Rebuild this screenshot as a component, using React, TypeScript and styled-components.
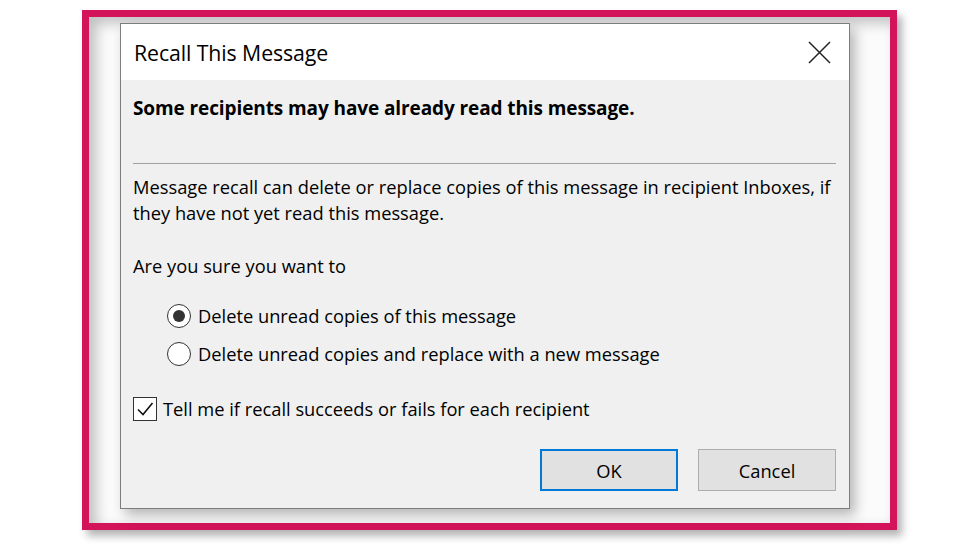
import React from "react";
import styled, { createGlobalStyle } from "styled-components";

const Global = createGlobalStyle`
  html, body { margin: 0; padding: 0; background: #ffffff; }
  body { font-family: "Open Sans", "Noto Sans", sans-serif; color: #000; }
  * { box-sizing: border-box; }
`;

const Page = styled.div`
  width: 970px;
  height: 546px;
  padding: 10px 0 0 82px;
  background: #ffffff;
  overflow: hidden;
`;

const Frame = styled.div`
  width: 815px;
  height: 520px;
  border: 7px solid #d4145a;
  background: #fbfbfb;
  box-shadow: 5px 6px 8px rgba(0, 0, 0, 0.3), inset 7px 6px 14px rgba(0, 0, 0, 0.24);
  padding: 6px 0 0 31px;
  display: flex;
  align-items: flex-start;
`;

const Dialog = styled.div`
  width: 730px;
  height: 486px;
  border: 1px solid #7d7d7d;
  background: #f0f0f0;
  box-shadow: 5px 6px 12px rgba(0, 0, 0, 0.28);
  display: flex;
  flex-direction: column;
`;

const TitleBar = styled.div`
  height: 56px;
  background: #ffffff;
  display: flex;
  align-items: center;
  justify-content: space-between;
  padding: 0 18px 0 13px;
`;

const Title = styled.div`
  font-size: 21.3px;
  letter-spacing: -0.1px;
`;

const CloseIcon = styled.svg`
  width: 23px;
  height: 23px;
  display: block;
`;

const Body = styled.div`
  flex: 1;
  display: flex;
  flex-direction: column;
  padding: 15px 13px 17px 12px;
  font-size: 18.3px;
`;

const Heading = styled.div`
  font-weight: 700;
  line-height: 26px;
  font-size: 19px;
  letter-spacing: -0.1px;
`;

const Separator = styled.div`
  margin-top: 42px;
  height: 1px;
  background: #a0a0a0;
`;

const Paragraph = styled.p<{ $gap: number }>`
  margin: ${(p) => p.$gap}px 0 0 0;
  line-height: 26px;
`;

const Options = styled.div`
  margin-top: 24px;
  padding-left: 34px;
  display: flex;
  flex-direction: column;
  gap: 12px;
`;

const ChoiceRow = styled.label<{ $gap: number }>`
  display: flex;
  align-items: center;
  height: 26px;
  gap: ${(p) => p.$gap}px;
  line-height: 26px;
`;

const Radio = styled.span<{ $checked: boolean }>`
  width: 24px;
  height: 24px;
  border-radius: 50%;
  border: 1.5px solid #333333;
  background: #ffffff;
  display: flex;
  align-items: center;
  justify-content: center;
  flex: none;
  &::after {
    content: "";
    width: 12px;
    height: 12px;
    border-radius: 50%;
    background: #333333;
    display: ${(p) => (p.$checked ? "block" : "none")};
  }
`;

const CheckBox = styled.span`
  width: 24px;
  height: 24px;
  border: 1.5px solid #333333;
  background: #ffffff;
  display: flex;
  align-items: center;
  justify-content: center;
  flex: none;
`;

const CheckRow = styled(ChoiceRow)`
  margin-top: 29px;
`;

const Buttons = styled.div`
  margin-top: 27px;
  display: flex;
  justify-content: flex-end;
  gap: 20px;
`;

const Button = styled.button<{ $default?: boolean }>`
  width: 138px;
  height: 42px;
  font-family: inherit;
  font-size: 18.3px;
  color: #000;
  background: #e1e1e1;
  border: ${(p) => (p.$default ? "2px solid #0078d7" : "1px solid #adadad")};
  padding: 0;
  cursor: default;
`;

export default function App() {
  return (
    <>
      <Global />
      <Page>
        <Frame>
          <Dialog>
            <TitleBar>
              <Title>Recall This Message</Title>
              <CloseIcon viewBox="0 0 23 23">
                <path d="M1 1 L22 22 M22 1 L1 22" stroke="#222" strokeWidth="1.5" fill="none" />
              </CloseIcon>
            </TitleBar>
            <Body>
              <Heading>Some recipients may have already read this message.</Heading>
              <Separator />
              <Paragraph $gap={10}>
                Message recall can delete or replace copies of this message in recipient Inboxes, if
                <br />
                they have not yet read this message.
              </Paragraph>
              <Paragraph $gap={27}>Are you sure you want to</Paragraph>
              <Options>
                <ChoiceRow $gap={7}>
                  <Radio $checked={true} />
                  Delete unread copies of this message
                </ChoiceRow>
                <ChoiceRow $gap={7}>
                  <Radio $checked={false} />
                  Delete unread copies and replace with a new message
                </ChoiceRow>
              </Options>
              <CheckRow $gap={6}>
                <CheckBox>
                  <svg width="20" height="20" viewBox="0 0 20 20">
                    <path d="M3 10.5 L8 15.5 L17.5 4" stroke="#111" strokeWidth="1.6" fill="none" />
                  </svg>
                </CheckBox>
                Tell me if recall succeeds or fails for each recipient
              </CheckRow>
              <Buttons>
                <Button $default>OK</Button>
                <Button>Cancel</Button>
              </Buttons>
            </Body>
          </Dialog>
        </Frame>
      </Page>
    </>
  );
}
